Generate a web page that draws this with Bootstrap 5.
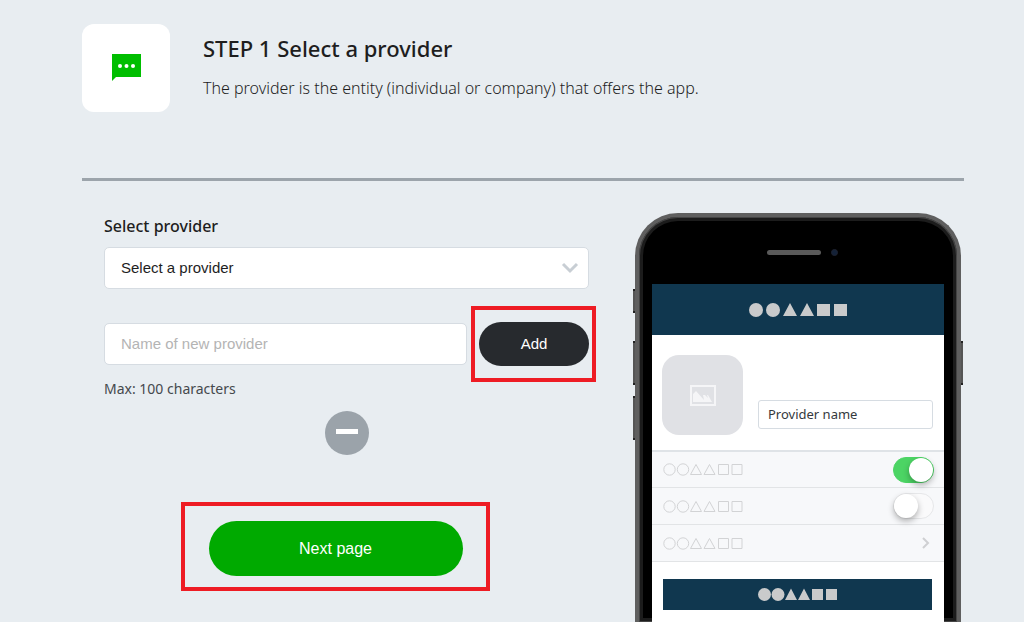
<!DOCTYPE html>
<html lang="en">
<head>
<meta charset="utf-8">
<meta name="viewport" content="width=device-width, initial-scale=1">
<title>Select a provider</title>
<link href="https://cdn.jsdelivr.net/npm/bootstrap@5.3.0/dist/css/bootstrap.min.css" rel="stylesheet">
<style>
  body { background: #e8edf1; color: #1e1e1e; font-family: "Noto Sans", sans-serif; }
  .page { padding: 24px 60px 0 82px; }
  .step-icon { width: 88px; height: 88px; border-radius: 12px; }
  .step-title { font-size: 22px; line-height: 32px; font-weight: 500; }
  .step-text { font-size: 16px; line-height: 24px; font-weight: 300; color: #1e1e1e; }
  .step-head { gap: 33px; padding-bottom: 66px; border-bottom: 3px solid #9ca4ab; }
  .step-body { gap: 46px; padding: 32px 3px 0 0; }
  .fields { padding-left: 22px; }
  .field-label { font-size: 16px; line-height: 26px; font-weight: 500; }
  .field { height: 42px; padding: 0 16px 2px; font: 15px "Liberation Sans", sans-serif; color: #1e1e1e; border: 1px solid #d6dce2; border-radius: 5px; }
  select.field { background-image: url("data:image/svg+xml,%3csvg xmlns='http://www.w3.org/2000/svg' viewBox='0 0 18 12'%3e%3cpath fill='none' stroke='%23c8ced4' stroke-width='3' d='M2 2l7 7 7-7'/%3e%3c/svg%3e"); background-size: 18px 12px; background-position: right 9px center; }
  .field::placeholder { color: #b4b4b4; }
  .name-row { margin-top: 33px; }
  .field-help { font-size: 14px; line-height: 21px; color: #45494d; }
  .pill { border: 0; border-radius: 28px; color: #fff; font-family: "Liberation Sans", sans-serif; }
  .pill-add { width: 110px; height: 44px; font-size: 15px; background: #272a2e; }
  .pill-next { width: 254px; height: 55px; font-size: 16px; background: #00aa00; }
  .next-row { margin-top: 66px; }
  .minus { width: 44px; height: 44px; border: 0; border-radius: 50%; background: #9ba3aa; }
  .marked::after { content: ""; position: absolute; border: 4px solid #ee1c24; pointer-events: none; }
  .marked-add::after { inset: -16px -7px -16px -4px; }
  .marked-next::after { inset: -19px -27px -15px -28px; }

  .phone { flex: 0 0 326px; border: solid #5f5f5f; border-width: 4px 4px 0; border-radius: 43px 43px 0 0; background: #000; box-shadow: inset 0 0 0 1px #444, inset 0 0 0 4px #1c1c1c; padding: 0 13px; }
  .phone-top { height: 67px; gap: 10px; padding: 4px 0 0 8px; }
  .speaker { width: 54px; height: 5px; border-radius: 3px; background: #5a5a5a; }
  .camera { width: 7px; height: 7px; border-radius: 50%; background: #142238; border: 1px solid #1e2230; }
  .side-key { position: absolute; width: 2px; background: #555; border: solid #222; border-width: 2px 0; }
  .key-l { left: -6px; }
  .key-r { right: -6px; }
  .navy { background: #10374f; }
  .bar-top { height: 51px; }
  .profile { padding: 20px 11px 15px 10px; gap: 15px; }
  .avatar { width: 81px; height: 80px; border-radius: 17px; background: #e0e1e5; }
  .name-box { height: 29px; padding: 0 9px; font-size: 13px; color: #35393d; border: 1px solid #d6dce2; border-radius: 3px; margin-bottom: 6px; }
  .rows { border-top: 2px solid #dfe3e7; }
  .set-row { height: 37px; padding: 0 10px 0 11px; background: #f7f8fa; border-bottom: 1px solid #e2e4e6; }
  .set-row:first-child { height: 36px; }
  .toggle { appearance: none; width: 41px; height: 26px; margin: 0; border-radius: 13px; border: 1px solid #e6e7e9; background: #fafafb; display: flex; align-items: center; }
  .toggle::before { content: ""; width: 24px; height: 24px; border-radius: 50%; background: #fff; box-shadow: 0 3px 6px rgba(0,0,0,.3); }
  .toggle:checked { background: #4cd464; border-color: #4cd464; justify-content: flex-end; }
  .bar-low { height: 31px; margin: 17px 12px 0 11px; }
</style>
</head>
<body>
<svg class="d-none" aria-hidden="true">
  <symbol id="shapes-solid" viewBox="0 0 98 14">
    <g fill="#c9cacb"><circle cx="7" cy="7" r="7"/><circle cx="24" cy="7" r="7"/><path d="M41 0l7 13H34zM58 0l7 13H51zM68 1h13v12H68zM85 1h13v12H85z"/></g>
  </symbol>
  <symbol id="shapes-line" viewBox="0 0 80 13">
    <g fill="none" stroke="#d2d3d5"><circle cx="6.500" cy="6.500" r="5.700"/><circle cx="20" cy="6.500" r="5.700"/><path d="M33 1.500l5.500 10h-11zM46.500 1.500l5.500 10h-11zM55.500 1.500h10v10h-10zM69 1.500h10v10H69z"/></g>
  </symbol>
</svg>

<main class="page d-flex flex-column min-vh-100 overflow-hidden">
  <header class="step-head d-flex">
    <div class="step-icon bg-white d-flex align-items-center justify-content-center flex-shrink-0">
      <svg width="30" height="28" viewBox="0 0 30 28" aria-hidden="true">
        <path fill="#00be00" d="M1 0h29v23H5l-4 4z"/>
        <g fill="#fff"><circle cx="9" cy="12" r="2"/><circle cx="15.500" cy="12" r="2"/><circle cx="22" cy="12" r="2"/></g>
      </svg>
    </div>
    <div class="pt-2">
      <h1 class="step-title mb-2 pb-1">STEP 1 Select a provider</h1>
      <p class="step-text m-0">The provider is the entity (individual or company) that offers the app.</p>
    </div>
  </header>

  <div class="step-body d-flex flex-grow-1">
    <form class="flex-grow-1">
      <div class="fields">
        <label class="field-label d-block mb-2" for="provider">Select provider</label>
        <select class="form-select field" id="provider"><option>Select a provider</option></select>
        <div class="name-row d-flex align-items-center">
          <input class="form-control field" type="text" id="newName" placeholder="Name of new provider" maxlength="100" aria-label="Name of new provider" aria-describedby="nameHelp">
          <div class="marked marked-add position-relative ms-2 ps-1">
            <button type="button" class="pill pill-add">Add</button>
          </div>
        </div>
        <p class="field-help mt-2 pt-1 mb-0" id="nameHelp">Max: 100 characters</p>
        <div class="d-flex justify-content-center mt-2 pt-1">
          <button type="button" class="minus d-flex justify-content-center align-items-center" aria-label="Collapse">
            <svg width="22" height="8" viewBox="0 0 22 8" aria-hidden="true"><path fill="#fff" d="M0 0h22v5H0z"/></svg>
          </button>
        </div>
      </div>
      <div class="next-row d-flex justify-content-center">
        <div class="marked marked-next position-relative">
          <button type="submit" class="pill pill-next">Next page</button>
        </div>
      </div>
    </form>

    <section class="phone position-relative d-flex flex-column" aria-label="App preview">
      <i class="side-key key-l" style="top:72px;height:24px"></i>
      <i class="side-key key-l" style="top:124px;height:44px"></i>
      <i class="side-key key-l" style="top:179px;height:44px"></i>
      <i class="side-key key-r" style="top:124px;height:44px"></i>
      <div class="phone-top d-flex align-items-center justify-content-center">
        <span class="speaker"></span><span class="camera"></span>
      </div>
      <div class="flex-grow-1 bg-white">
        <div class="navy bar-top d-flex align-items-center justify-content-center">
          <svg width="98" height="14" aria-hidden="true"><use href="#shapes-solid"/></svg>
        </div>
        <div class="profile d-flex align-items-end">
          <div class="avatar flex-shrink-0 d-flex align-items-center justify-content-center">
            <svg width="26" height="21" viewBox="0 0 26 21" aria-hidden="true">
              <path fill="none" stroke="#f5f5f7" stroke-width="2" d="M1 1h24v19H1z"/>
              <path fill="#f5f5f7" d="M3 17V9l3-3 8 9-1-5h2l3 3-1-3h1l4 7z"/>
            </svg>
          </div>
          <div class="name-box flex-grow-1 d-flex align-items-center bg-white">Provider name</div>
        </div>
        <div class="rows">
          <div class="set-row d-flex align-items-center justify-content-between">
            <svg width="80" height="13" aria-hidden="true"><use href="#shapes-line"/></svg>
            <input class="toggle" type="checkbox" role="switch" aria-label="First option" checked>
          </div>
          <div class="set-row d-flex align-items-center justify-content-between">
            <svg width="80" height="13" aria-hidden="true"><use href="#shapes-line"/></svg>
            <input class="toggle" type="checkbox" role="switch" aria-label="Second option">
          </div>
          <div class="set-row d-flex align-items-center justify-content-between">
            <svg width="80" height="13" aria-hidden="true"><use href="#shapes-line"/></svg>
            <svg class="me-1" width="8" height="12" viewBox="0 0 8 12" aria-hidden="true"><path fill="none" stroke="#cfd0d2" stroke-width="2" d="M1 1l5 5-5 5"/></svg>
          </div>
        </div>
        <div class="navy bar-low d-flex align-items-center justify-content-center">
          <svg width="80" height="13" viewBox="0 0 80 13" aria-hidden="true">
            <g fill="#c9cacb"><circle cx="6.500" cy="6.500" r="6.500"/><circle cx="20" cy="6.500" r="6.500"/><path d="M33 0.500l6 11.500H27zM46 0.500l6 11.500H40zM54 1h11v11H54zM68 1h11v11H68z"/></g>
          </svg>
        </div>
      </div>
    </section>
  </div>
</main>
<script src="https://cdn.jsdelivr.net/npm/bootstrap@5.3.0/dist/js/bootstrap.bundle.min.js"></script>
</body>
</html>
